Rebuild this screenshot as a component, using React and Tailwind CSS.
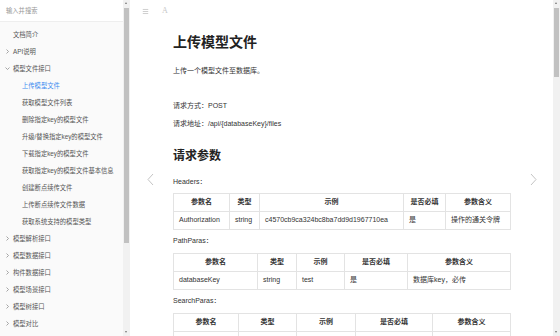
import { Menu } from "lucide-react"

const font = { fontFamily: '"Liberation Sans", "Noto Sans CJK SC", sans-serif' }

const navItems = [
  { label: "文档简介", level: 0 },
  { label: "API说明", level: 0, arrow: "right" },
  { label: "模型文件接口", level: 0, arrow: "down" },
  { label: "上传模型文件", level: 1, active: true },
  { label: "获取模型文件列表", level: 1 },
  { label: "删除指定key的模型文件", level: 1 },
  { label: "升级/替换指定key的模型文件", level: 1 },
  { label: "下载指定key的模型文件", level: 1 },
  { label: "获取指定key的模型文件基本信息", level: 1 },
  { label: "创建断点续传文件", level: 1 },
  { label: "上传断点续传文件数据", level: 1 },
  { label: "获取系统支持的模型类型", level: 1 },
  { label: "模型解析接口", level: 0, arrow: "right" },
  { label: "模型数据接口", level: 0, arrow: "right" },
  { label: "构件数据接口", level: 0, arrow: "right" },
  { label: "模型场景接口", level: 0, arrow: "right" },
  { label: "模型树接口", level: 0, arrow: "right" },
  { label: "模型对比", level: 0, arrow: "right" },
]

const tables = [
  {
    label: "Headers：",
    widths: [56, 30, 144, 42, 65],
    rows: [["Authorization", "string", "c4570cb9ca324bc8ba7dd9d1967710ea", "是", "操作的通关令牌"]],
  },
  {
    label: "PathParas：",
    widths: [84, 39, 48, 63, 103],
    rows: [["databaseKey", "string", "test", "是", "数据库key，必传"]],
  },
  {
    label: "SearchParas：",
    widths: [65, 58, 59, 77, 78],
    rows: [["", "", "", "", ""]],
  },
]

const heads = ["参数名", "类型", "示例", "是否必填", "参数含义"]

function Arrow({ dir }) {
  if (dir === "down") {
    return (
      <svg width="5" height="5" viewBox="0 0 10 10" className="text-[#888]">
        <path d="M1 3 L5 7 L9 3" fill="none" stroke="currentColor" strokeWidth="1.5" />
      </svg>
    )
  }
  return (
    <svg width="5" height="5" viewBox="0 0 10 10" className="text-[#888]">
      <path d="M3 1 L7 5 L3 9" fill="none" stroke="currentColor" strokeWidth="1.5" />
    </svg>
  )
}

function Scrollbar({ thumbTop, thumbHeight }) {
  return (
    <div className="relative w-[7px] h-full bg-[#f1f1f1] shrink-0">
      <div className="absolute left-[2px] top-[2px] w-0 h-0 border-l-[1.5px] border-r-[1.5px] border-b-[2px] border-l-transparent border-r-transparent border-b-[#777]" />
      <div
        className="absolute left-[1px] w-[5px] bg-[#c1c1c1]"
        style={{ top: thumbTop, height: thumbHeight }}
      />
      <div className="absolute left-[2px] bottom-[3px] w-0 h-0 border-l-[1.5px] border-r-[1.5px] border-t-[2px] border-l-transparent border-r-transparent border-t-[#777]" />
    </div>
  )
}

function Sidebar() {
  return (
    <div className="w-[123px] h-full bg-[#fafafa] flex flex-col shrink-0">
      <div className="h-[22px] bg-white border-b border-[#eeeeee] flex items-center px-[6px] text-[6.3px] text-[#999]">
        输入并搜索
      </div>
      <div className="pt-[4px]">
        {navItems.map(item => (
          <div
            key={item.label}
            className={
              "h-[17px] flex items-center text-[6.3px] whitespace-nowrap " +
              (item.active ? "text-[#3c8cf0]" : "text-[#555]")
            }
          >
            <div className="w-[13px] pl-[5px] flex items-center">
              {item.arrow && <Arrow dir={item.arrow} />}
            </div>
            {item.level === 1 && <div className="w-[9px]" />}
            <span>{item.label}</span>
          </div>
        ))}
      </div>
    </div>
  )
}

function ParamTable({ widths, rows }) {
  return (
    <table className="table-fixed border-collapse w-[337px] text-[7px] text-[#333]">
      <colgroup>
        {widths.map((w, i) => (
          <col key={i} style={{ width: w }} />
        ))}
      </colgroup>
      <thead>
        <tr className="h-[18px]">
          {heads.map(h => (
            <th key={h} className="border border-[#e3e3e3] font-bold text-center">
              {h}
            </th>
          ))}
        </tr>
      </thead>
      <tbody>
        {rows.map((r, i) => (
          <tr key={i} className="h-[18px]">
            {r.map((c, j) => (
              <td key={j} className="border border-[#e3e3e3] px-[5px] whitespace-nowrap overflow-hidden">
                {c}
              </td>
            ))}
          </tr>
        ))}
      </tbody>
    </table>
  )
}

function Content() {
  return (
    <div className="relative flex-1 h-full bg-white overflow-hidden">
      <div className="h-[22px] flex items-center pl-[12px] gap-[13px] text-[#c8c8c8]">
        <Menu size={7} strokeWidth={3} />
        <span className="text-[8px] font-['Liberation_Serif']">A</span>
      </div>
      <div className="pl-[43px] text-[#333]">
        <h1 className="mt-[10px] h-[20px] leading-[20px] text-[14px] font-bold text-[#222]">上传模型文件</h1>
        <p className="mt-[13px] h-[12px] leading-[12px] text-[7px]">上传一个模型文件至数据库。</p>
        <p className="mt-[23px] h-[12px] leading-[12px] text-[7px]">请求方式：POST</p>
        <p className="mt-[6px] h-[12px] leading-[12px] text-[7px]">请求地址：/api/{"{databaseKey}"}/files</p>
        <h2 className="mt-[17px] h-[18px] leading-[18px] text-[12px] font-bold text-[#222]">请求参数</h2>
        {tables.map((t, i) => (
          <div key={t.label}>
            <p
              className={
                "h-[12px] leading-[12px] text-[7px] " +
                (i === 0 ? "mt-[11px]" : "mt-[5px]")
              }
            >
              {t.label}
            </p>
            <div className={i === 0 ? "mt-[5px]" : "mt-[6px]"}>
              <ParamTable widths={t.widths} rows={t.rows} />
            </div>
          </div>
        ))}
      </div>
      <div className="absolute left-[17px] top-[173px] text-[#c4c4c4]">
        <svg width="7" height="13" viewBox="0 0 7 13">
          <path d="M6 1 L1 6.5 L6 12" fill="none" stroke="currentColor" strokeWidth="1" />
        </svg>
      </div>
      <div className="absolute left-[400px] top-[173px] text-[#c4c4c4]">
        <svg width="7" height="13" viewBox="0 0 7 13">
          <path d="M1 1 L6 6.5 L1 12" fill="none" stroke="currentColor" strokeWidth="1" />
        </svg>
      </div>
    </div>
  )
}

export default function App() {
  return (
    <div className="w-[560px] h-[336px] flex overflow-hidden" style={font}>
      <Sidebar />
      <Scrollbar thumbTop={8} thumbHeight={235} />
      <Content />
      <Scrollbar thumbTop={8} thumbHeight={69} />
    </div>
  )
}
